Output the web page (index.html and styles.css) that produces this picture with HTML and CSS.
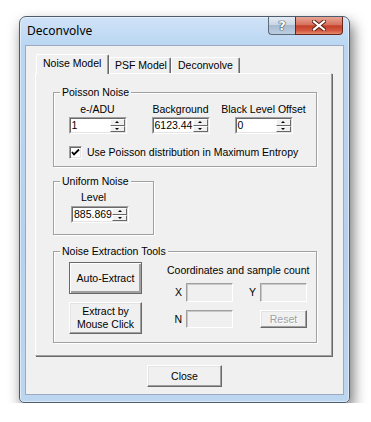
FILE: index.html
```html
<!DOCTYPE html>
<html lang="en">

<head>
    <meta charset="UTF-8">
    <title>Deconvolve</title>
    <link rel="stylesheet" href="styles.css">
</head>

<body>

    <div class="window">
        <!-- title bar -->
        <div class="titlebar">
            <span class="title">Deconvolve</span>
            <div class="caption-buttons">
                <span class="cap-btn help">?</span>
                <span class="cap-btn close">
                    <svg width="14" height="11" viewBox="0 0 14 11">
                        <path d="M2 1.5 L12 9.5 M12 1.5 L2 9.5" stroke="#5a1a12" stroke-width="4" stroke-linecap="square" />
                        <path d="M2 1.5 L12 9.5 M12 1.5 L2 9.5" stroke="#fff" stroke-width="2.2" stroke-linecap="square" />
                    </svg>
                </span>
            </div>
        </div>

        <!-- client area -->
        <div class="client">
            <div class="tabs">
                <span class="tab active">Noise Model</span>
                <span class="tab tab-psf">PSF Model</span>
                <span class="tab tab-dec">Deconvolve</span>
            </div>

            <div class="panel">
                <fieldset class="group">
                    <legend>Poisson Noise</legend>
                    <div class="poisson">
                        <div class="field">
                            <span class="field-label">e-/ADU</span>
                            <div class="spin">
                                <div class="spin-inner">
                                    <span class="spin-value">1</span>
                                    <span class="spin-arrows"><span><i class="up"></i></span><span><i class="down"></i></span></span>
                                </div>
                            </div>
                        </div>
                        <div class="field">
                            <span class="field-label">Background</span>
                            <div class="spin">
                                <div class="spin-inner">
                                    <span class="spin-value">6123.44</span>
                                    <span class="spin-arrows"><span><i class="up"></i></span><span><i class="down"></i></span></span>
                                </div>
                            </div>
                        </div>
                        <div class="field">
                            <span class="field-label">Black Level Offset</span>
                            <div class="spin">
                                <div class="spin-inner">
                                    <span class="spin-value">0</span>
                                    <span class="spin-arrows"><span><i class="up"></i></span><span><i class="down"></i></span></span>
                                </div>
                            </div>
                        </div>
                    </div>
                    <div class="check">
                        <span class="check-box">
                            <svg width="9" height="9" viewBox="0 0 9 9">
                                <path d="M1 4 L3 6.5 L8 1.5" fill="none" stroke="#000" stroke-width="1.8" />
                            </svg>
                        </span>
                        <span>Use Poisson distribution in Maximum Entropy</span>
                    </div>
                </fieldset>

                <fieldset class="group uniform">
                    <legend>Uniform Noise</legend>
                    <div class="uniform-body">
                        <span class="level-label">Level</span>
                        <div class="spin">
                            <div class="spin-inner">
                                <span class="spin-value">885.869</span>
                                <span class="spin-arrows"><span><i class="up"></i></span><span><i class="down"></i></span></span>
                            </div>
                        </div>
                    </div>
                </fieldset>

                <fieldset class="group">
                    <legend>Noise Extraction Tools</legend>
                    <div class="extract">
                        <div class="extract-buttons">
                            <span class="btn default">Auto-Extract</span>
                            <span class="btn">Extract by<br>Mouse Click</span>
                        </div>
                        <div class="coords">
                            <span class="coords-title">Coordinates and sample count</span>
                            <div class="coords-grid">
                                <span class="coord-label">X</span>
                                <span class="edit"></span>
                                <span class="coord-label">Y</span>
                                <span class="edit"></span>
                                <span class="coord-label">N</span>
                                <span class="edit"></span>
                                <span></span>
                                <span class="btn disabled">Reset</span>
                            </div>
                        </div>
                    </div>
                </fieldset>
            </div>

            <div class="footer">
                <span class="btn close-btn">Close</span>
            </div>
        </div>
    </div>

</body>

</html>
```

FILE: styles.css
```css
html,
body {
    margin: 0;
    background: #fff;
}

body {
    padding: 16px 0 0 19px;
    font-family: "Liberation Sans", Arial, sans-serif;
    font-size: 10.5px;
    color: #000;
}

/* window frame */
.window {
    width: 331px;
    height: 387px;
    box-sizing: border-box;
    border: 1px solid #4d5c6d;
    border-radius: 7px 7px 5px 5px;
    padding: 0 5px 7px 5px;
    display: flex;
    flex-direction: column;
    background: linear-gradient(to bottom, #d0e3f7 0, #bad6f2 28px, #b6d1ee 60%, #bdd6f0 100%);
    box-shadow: 0 0 0 1px rgba(255, 255, 255, 0.5) inset, 3px 7px 14px rgba(0, 0, 0, 0.55);
}

.titlebar {
    display: flex;
    height: 28px;
}

.title {
    font-family: "Noto Sans", "Open Sans", sans-serif;
    font-size: 12px;
    line-height: 16px;
    padding: 6px 0 0 2px;
}

.caption-buttons {
    display: flex;
    margin-left: auto;
    margin-right: 1px;
    height: 18px;
}

.cap-btn {
    display: flex;
    align-items: center;
    justify-content: center;
    height: 18px;
    box-sizing: border-box;
    border: 1px solid #5c6b7b;
    border-top: none;
}

.help {
    width: 27px;
    border-radius: 0 0 0 4px;
    border-right: none;
    background: linear-gradient(to bottom, #e3ebf4 0, #c9d6e4 45%, #a8bbd0 50%, #bccde0 100%);
    color: #fff;
    font-family: "DejaVu Sans", sans-serif;
    font-weight: bold;
    font-size: 13px;
    text-shadow: 0 0 1px #2d3c4d, 0 0 1px #2d3c4d, 0 0 1px #2d3c4d;
}

.close {
    width: 48px;
    border-color: #6b2418;
    border-radius: 0 0 4px 0;
    background: linear-gradient(to bottom, #e7a595 0, #d8735e 45%, #c3402a 52%, #d3583f 80%, #e58c6f 100%);
}

/* client area */
.client {
    flex: 1;
    display: flex;
    flex-direction: column;
    background: #f0f0f0;
    border: 1px solid #9aabbf;
    padding: 8px 10px 7px 9px;
}

.tabs {
    display: flex;
    align-items: flex-end;
    padding-left: 1px;
    margin-bottom: -1px;
    position: relative;
    z-index: 1;
}

.tab {
    box-sizing: border-box;
    height: 16px;
    margin-bottom: 1px;
    line-height: 14px;
    padding-left: 6px;
    background: #f0f0f0;
    border: 1px solid;
    border-bottom: none;
    border-color: #fff #696969 #696969 #fff;
    box-shadow: inset -1px 0 0 #a0a0a0;
    border-radius: 2px 2px 0 0;
    white-space: nowrap;
}

.tab.active {
    width: 73px;
    height: 20px;
    margin-bottom: 0;
    padding-left: 6px;
    line-height: 17px;
}

.tab-psf {
    width: 62px;
    padding-left: 5px;
}

.tab-dec {
    width: 69px;
    padding-left: 6px;
}

.panel {
    flex: 1;
    border: 1px solid;
    border-color: #fff #a0a0a0 #a0a0a0 #fff;
    box-shadow: 1px 1px 0 #696969;
    margin-right: 1px;
    padding: 12px 14px 0 17px;
}

/* group boxes */
.group {
    margin: 0;
    padding: 0;
    border: 1px solid #a0a0a0;
    box-shadow: 1px 1px 0 #fff, inset 1px 1px 0 #fff;
}

.group+.group {
    margin-top: 8px;
}

.group+.group+.group {
    margin-top: 10px;
}

.group legend {
    margin-left: 6px;
    padding: 0 2px;
    line-height: 13px;
    background: #f0f0f0;
}

.poisson {
    display: grid;
    grid-template-columns: 83px 83px 83px;
    padding: 4px 0 0 2px;
}

.field {
    display: flex;
    flex-direction: column;
    align-items: center;
    min-width: 0;
}

.field-label {
    line-height: 13px;
    margin-bottom: 1px;
    white-space: nowrap;
}

/* spin edit */
.spin {
    display: flex;
    width: 58px;
    height: 17px;
    box-sizing: border-box;
    border: 1px solid;
    border-color: #a0a0a0 #fff #fff #a0a0a0;
    background: #fff;
}

.spin-inner {
    flex: 1;
    display: flex;
    border: 1px solid;
    border-color: #696969 #e3e3e3 #e3e3e3 #696969;
    min-width: 0;
}

.spin-value {
    flex: 1;
    padding-left: 1px;
    line-height: 13px;
    overflow: hidden;
    white-space: nowrap;
}

.spin-arrows {
    width: 15px;
    display: flex;
    flex-direction: column;
}

.spin-arrows span {
    flex: 1;
    display: flex;
    align-items: center;
    justify-content: center;
    background: #f0f0f0;
    border: 1px solid;
    border-color: #fff #696969 #696969 #fff;
}

.spin-arrows i {
    width: 0;
    height: 0;
    border-left: 2px solid transparent;
    border-right: 2px solid transparent;
}

.spin-arrows i.up {
    border-bottom: 2px solid #000;
}

.spin-arrows i.down {
    border-top: 2px solid #000;
}

/* checkbox */
.check {
    display: flex;
    align-items: center;
    margin: 12px 0 7px 15px;
    line-height: 13px;
}

.check-box {
    width: 13px;
    height: 13px;
    box-sizing: border-box;
    margin-right: 5px;
    border: 1px solid;
    border-color: #a0a0a0 #fff #fff #a0a0a0;
    box-shadow: inset 1px 1px 0 #696969, inset -1px -1px 0 #e3e3e3;
    background: #fff;
    display: flex;
    align-items: center;
    justify-content: center;
}

/* uniform noise */
.uniform {
    width: 101px;
    box-sizing: border-box;
}

.uniform-body {
    display: flex;
    flex-direction: column;
    padding: 3px 0 11px 17px;
}

.level-label {
    line-height: 13px;
    margin: 0 0 2px 10px;
}

/* noise extraction */
.extract {
    display: flex;
    padding: 4px 0 8px 15px;
}

.extract-buttons {
    display: flex;
    flex-direction: column;
    gap: 8px;
}

.btn {
    display: flex;
    align-items: center;
    justify-content: center;
    text-align: center;
    box-sizing: border-box;
    background: #f0f0f0;
    border: 1px solid;
    border-color: #fff #696969 #696969 #fff;
    box-shadow: inset -1px -1px 0 #a0a0a0, inset 1px 1px 0 #e3e3e3;
    line-height: 13px;
}

.extract-buttons .btn {
    width: 73px;
    height: 32px;
}

.btn.default {
    border-color: #696969;
    box-shadow: inset 1px 1px 0 #fff, inset -2px -2px 0 #a0a0a0;
}

.coords {
    display: flex;
    flex-direction: column;
    margin-left: 25px;
    padding-top: 2px;
}

.coords-title {
    line-height: 13px;
    margin-bottom: 6px;
    white-space: nowrap;
}

.coords-grid {
    display: grid;
    grid-template-columns: 19px 47px 27px 47px;
    grid-template-rows: 19px 18px;
    row-gap: 8px;
}

.coord-label {
    text-align: right;
    padding-right: 4px;
    line-height: 19px;
}

.edit {
    border: 1px solid;
    border-color: #a0a0a0 #fff #fff #a0a0a0;
    box-shadow: inset 1px 1px 0 #c8c8c8;
    background: #f0f0f0;
}

.btn.disabled {
    color: #a0a0a0;
    text-shadow: 1px 1px 0 #fff;
}

.footer {
    display: flex;
    justify-content: center;
    padding-top: 9px;
    padding-left: 1px;
}

.close-btn {
    width: 75px;
    height: 22px;
}
```
